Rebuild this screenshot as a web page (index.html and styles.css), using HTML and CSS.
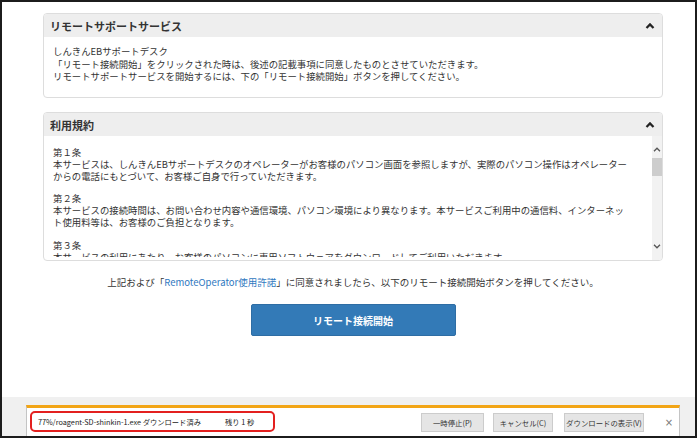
FILE: index.html
```html
<!DOCTYPE html>
<html lang="ja">
<head>
<meta charset="utf-8">
<title>リモートサポートサービス</title>
<link rel="stylesheet" href="styles.css">
</head>
<body>
<div class="frame">
  <main class="content">
    <section class="panel">
      <header class="panel-head">
        <h2>リモートサポートサービス</h2>
        <svg class="chev" viewBox="0 0 10 7"><polyline points="1.5,6 5,2.4 8.5,6"/></svg>
      </header>
      <div class="intro">
        <p>しんきんEBサポートデスク<br>「リモート接続開始」をクリックされた時は、後述の記載事項に同意したものとさせていただきます。<br>リモートサポートサービスを開始するには、下の「リモート接続開始」ボタンを押してください。</p>
      </div>
    </section>

    <section class="panel">
      <header class="panel-head">
        <h2>利用規約</h2>
        <svg class="chev" viewBox="0 0 10 7"><polyline points="1.5,6 5,2.4 8.5,6"/></svg>
      </header>
      <div class="terms-body">
        <div class="terms-text">
          <p>第１条<br>本サービスは、しんきんEBサポートデスクのオペレーターがお客様のパソコン画面を参照しますが、実際のパソコン操作はオペレーター<br>からの電話にもとづいて、お客様ご自身で行っていただきます。</p>
          <p>第２条<br>本サービスの接続時間は、お問い合わせ内容や通信環境、パソコン環境により異なります。本サービスご利用中の通信料、インターネッ<br>ト使用料等は、お客様のご負担となります。</p>
          <p>第３条<br>本サービスの利用にあたり、お客様のパソコンに専用ソフトウェアをダウンロードしてご利用いただきます。</p>
        </div>
        <div class="scrollbar">
          <svg class="sb-arrow" viewBox="0 0 8 5"><polyline points="1,4.2 4,1.2 7,4.2"/></svg>
          <div class="sb-thumb"></div>
          <div class="sb-track"></div>
          <svg class="sb-arrow" viewBox="0 0 8 5"><polyline points="1,0.8 4,3.8 7,0.8"/></svg>
        </div>
      </div>
    </section>

    <p class="agree">上記および「<a href="#">RemoteOperator使用許諾</a>」に同意されましたら、以下のリモート接続開始ボタンを押してください。</p>
    <div class="actions">
      <button class="start" type="button">リモート接続開始</button>
    </div>
  </main>

  <footer class="dl-area">
    <div class="dl-bar">
      <div class="dl-status">
        <span class="dl-file">77%/roagent-SD-shinkin-1.exe ダウンロード済み</span>
        <span class="dl-remain">残り 1 秒</span>
      </div>
      <div class="dl-actions">
        <button class="dl-btn b1" type="button">一時停止(P)</button>
        <button class="dl-btn b2" type="button">キャンセル(C)</button>
        <button class="dl-btn b3" type="button">ダウンロードの表示(V)</button>
        <span class="dl-close">×</span>
      </div>
    </div>
  </footer>
</div>
</body>
</html>
```

FILE: styles.css
```css
* { box-sizing: border-box; }
html, body { margin: 0; background: #ffffff; }
body {
  font-family: "Noto Sans CJK JP", "Noto Sans", sans-serif;
  color: #333333;
}
p { margin: 0; }

.frame {
  width: 697px;
  height: 438px;
  border: 2px solid #1c1c1c;
  display: flex;
  flex-direction: column;
  background: #ffffff;
}

.content {
  flex: 1;
  padding: 11px 32px 0 41px;
  display: flex;
  flex-direction: column;
}

.panel {
  border: 1px solid #dddddd;
  border-radius: 4px;
  background: #ffffff;
  overflow: hidden;
}
.panel + .panel { margin-top: 14px; }

.panel-head {
  height: 23px;
  background: #eeeeee;
  display: flex;
  align-items: center;
  justify-content: space-between;
  padding: 0 7px 0 6px;
}
.panel-head h2 {
  margin: 0;
  font-size: 11px;
  font-weight: bold;
  color: #333333;
}
.chev { width: 10px; height: 7px; }
.chev polyline { fill: none; stroke: #222222; stroke-width: 2.2; }

.intro {
  height: 60px;
  padding: 8px 9px 0;
  font-size: 9.4px;
  line-height: 12.5px;
  white-space: nowrap;
}

.terms-body {
  height: 124px;
  display: flex;
  align-items: flex-start;
}
.terms-text {
  flex: 1;
  height: 121px;
  overflow: hidden;
  padding: 11px 0 0 9px;
  font-size: 9.4px;
  line-height: 11.8px;
  white-space: nowrap;
}
.terms-text p + p { margin-top: 11px; }

.scrollbar {
  width: 10px;
  height: 124px;
  background: #f2f2f2;
  display: flex;
  flex-direction: column;
  align-items: center;
  padding: 11px 0 11px;
}
.sb-arrow { width: 8px; height: 5px; flex: none; }
.sb-arrow polyline { fill: none; stroke: #555555; stroke-width: 1.3; }
.sb-thumb {
  width: 10px;
  height: 18px;
  margin-top: 6px;
  background: #cdcdcd;
  flex: none;
}
.sb-track { flex: 1; }

.agree {
  margin-top: 15px;
  text-align: center;
  font-size: 9.5px;
  line-height: 12px;
  color: #333333;
}
.agree a { color: #2f78c0; text-decoration: none; }

.actions {
  margin-top: 16px;
  display: flex;
  justify-content: center;
}
.start {
  width: 205px;
  height: 32px;
  background: #337ab7;
  border: 1px solid #2e6da4;
  border-radius: 2px;
  color: #ffffff;
  font-family: "Noto Sans CJK JP", sans-serif;
  font-size: 10px;
  font-weight: bold;
  padding: 0;
}

.dl-area {
  height: 39px;
  background: #f0f0f0;
  padding: 8px 15px 0 24px;
  display: flex;
}
.dl-bar {
  flex: 1;
  background: #ffffff;
  border-top: 3px solid #f2a516;
  border-left: 1px solid #c4c4c4;
  border-right: 1px solid #c4c4c4;
  display: flex;
  align-items: flex-start;
  justify-content: space-between;
  padding: 3px 0 0 3px;
}
.dl-status {
  width: 245px;
  height: 21px;
  border: 2px solid #e3201f;
  border-radius: 5px;
  display: flex;
  align-items: center;
  padding-left: 6px;
  font-size: 7.3px;
  color: #222222;
  white-space: nowrap;
}
.dl-remain { margin-left: 24px; }

.dl-actions {
  display: flex;
  align-items: center;
  gap: 9px;
  padding-top: 2px;
}
.dl-btn {
  height: 19px;
  background: #e5e5e5;
  border: 1px solid #cccccc;
  border-radius: 0;
  font-family: "Noto Sans CJK JP", sans-serif;
  font-size: 7.4px;
  color: #333333;
  padding: 0;
}
.b1 { width: 63px; }
.b2 { width: 60px; }
.b3 { width: 80px; margin-left: 2px; }
.dl-close {
  width: 20px;
  margin-left: 6px;
  text-align: center;
  font-size: 10px;
  color: #777777;
  font-family: "DejaVu Sans", sans-serif;
}
```
